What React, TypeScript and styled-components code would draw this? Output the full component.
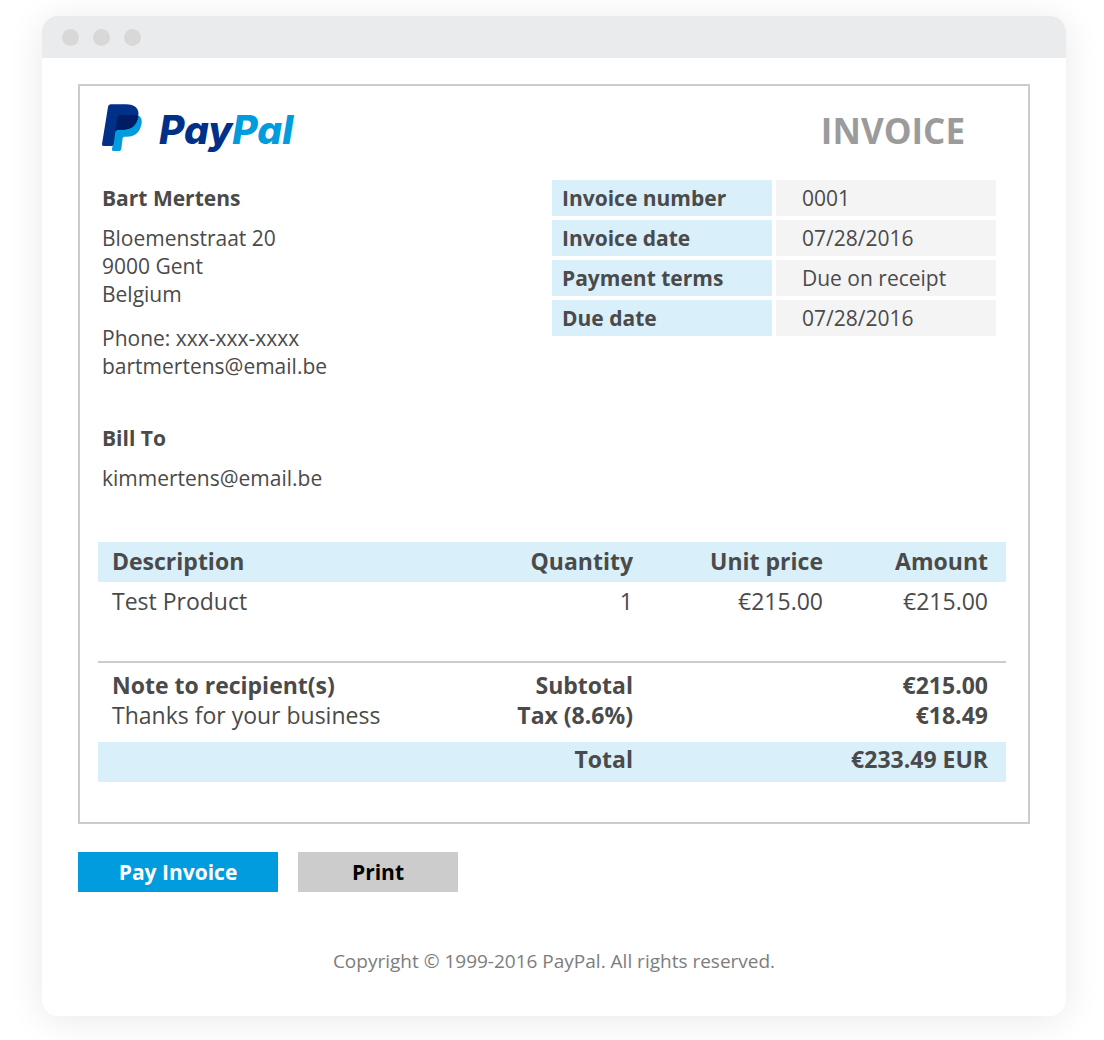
import React from "react";
import styled, { createGlobalStyle } from "styled-components";

const GlobalStyle = createGlobalStyle`
  *, *::before, *::after { box-sizing: border-box; }
  body {
    margin: 0;
    background: #fff;
    color: #4a4a4a;
    font-family: "Open Sans", "Noto Sans", sans-serif;
    font-size: 21px;
    line-height: 28px;
  }
`;

const Page = styled.div`
  padding: 16px 38px 24px 42px;
`;

const BrowserWindow = styled.main`
  border-radius: 16px;
  overflow: hidden;
  background: #fff;
  box-shadow: 0 4px 36px rgba(0, 0, 0, 0.09);
`;

const TitleBar = styled.div`
  display: flex;
  align-items: center;
  gap: 14px;
  height: 42px;
  padding: 0 20px;
  background: #eaebed;
`;

const Dot = styled.span`
  width: 17px;
  height: 17px;
  border-radius: 50%;
  background: #d8d8d8;
`;

const Content = styled.div`
  padding: 26px 36px 40px;
`;

const Sheet = styled.article`
  padding: 0 22px 40px 18px;
  border: 2px solid #ccc;
`;

const SheetHeader = styled.header`
  display: flex;
  justify-content: space-between;
  align-items: center;
  height: 94px;
  padding: 0 41px 4px 4px;
`;

const Brand = styled.div`
  display: flex;
  align-items: flex-end;
  gap: 17px;
  padding-bottom: 7px;
`;

const Wordmark = styled.div`
  display: flex;
  color: #003087;
  font: italic 800 39px/44px Inter, sans-serif;
`;

const WordmarkAccent = styled.span`
  color: #009cde;
`;

const InvoiceHeading = styled.h1`
  margin: 0;
  color: #9b9b9b;
  font-size: 35px;
  line-height: 44px;
  font-weight: 700;
`;

const Parties = styled.section`
  display: flex;
  justify-content: space-between;
  align-items: flex-start;
  padding: 0 10px 50px 4px;
`;

const Contact = styled.address`
  display: flex;
  flex-direction: column;
  gap: 12px;
  padding-top: 4px;
  font-style: normal;
`;

const Name = styled.strong`
  font-weight: 700;
`;

const Lines = styled.div`
  display: flex;
  flex-direction: column;
`;

const Phone = styled(Lines)`
  margin-top: 4px;
  margin-bottom: 32px;
`;

const MetaTable = styled.table`
  width: 444px;
  border-spacing: 0;
  table-layout: fixed;
`;

const MetaLabel = styled.th`
  width: 224px;
  height: 40px;
  padding: 0 10px;
  background: #d9effa;
  border: solid #fff;
  border-width: 0 4px 4px 0;
  font-weight: 700;
  text-align: left;
`;

const MetaValue = styled.td`
  padding: 0 26px;
  background: #f4f4f4;
  border-bottom: 4px solid #fff;
`;

const ItemsTable = styled.table`
  width: 100%;
  border-collapse: collapse;
  font-size: 23px;
  line-height: 30px;
  white-space: nowrap;
`;

const Col = styled.col<{ $width?: number }>`
  width: ${(p) => (p.$width ? `${p.$width}px` : "auto")};
`;

const Cell = styled.td<{ $right?: boolean; $bold?: boolean }>`
  padding: 0 18px 0 14px;
  text-align: ${(p) => (p.$right ? "right" : "left")};
  font-weight: ${(p) => (p.$bold ? 700 : 400)};
`;

const HeadRow = styled.tr`
  background: #d9effa;
  & > th { padding-top: 4px; padding-bottom: 6px; }
`;

const ItemRow = styled.tr`
  border-bottom: 2px solid #ccc;
  & > td { padding-top: 4px; padding-bottom: 45px; }
`;

const SubtotalRow = styled.tr`
  & > td { padding-top: 7px; }
`;

const TaxRow = styled.tr`
  & > td { padding-bottom: 12px; }
`;

const TotalRow = styled.tr`
  background: #d9effa;
  & > td { padding-top: 2px; padding-bottom: 8px; }
`;

const Actions = styled.div`
  display: flex;
  gap: 20px;
  padding: 28px 0 54px;
`;

const Button = styled.button<{ $primary?: boolean }>`
  width: ${(p) => (p.$primary ? 200 : 160)}px;
  height: 40px;
  padding: 0;
  border: 0;
  background: ${(p) => (p.$primary ? "#009cde" : "#ccc")};
  color: ${(p) => (p.$primary ? "#fff" : "#000")};
  font: inherit;
  font-weight: 700;
  cursor: pointer;
`;

const Copyright = styled.footer`
  color: #7d7d7d;
  font-size: 19px;
  line-height: 30px;
  text-align: center;
`;

const meta = [
  ["Invoice number", "0001"],
  ["Invoice date", "07/28/2016"],
  ["Payment terms", "Due on receipt"],
  ["Due date", "07/28/2016"],
];

function PayPalMark() {
  return (
    <svg width="40" height="48" viewBox="0 0 120 144" aria-hidden="true">
      <path
        fill="#009cde"
        d="M47 36 H112 C119 42 121 52 118 62 C113 86 98 98 74 98 H68 C65 98 63 100 62 103 L58 134 C57 139 55 141 51 141 H34 C31 141 29 139 30 136 L33 116 Z"
      />
      <path
        fill="#003087"
        d="M27 1 H72 C98 1 113 13 109 37 C105 63 90 77 62 77 H50 C43 77 41 80 40 85 L35 120 C34 124 32 126 29 126 H5 C1 126 0 124 0 120 L18 9 C19 4 22 1 27 1 Z"
      />
      <path
        fill="#001c64"
        d="M54 33 H92 C99 33 105 34 109 36 C105 63 90 77 62 77 H50 C45 77 42 79 40 83 L46 40 C47 36 50 33 54 33 Z"
      />
    </svg>
  );
}

export default function App() {
  return (
    <Page>
      <GlobalStyle />
      <BrowserWindow>
        <TitleBar>
          <Dot />
          <Dot />
          <Dot />
        </TitleBar>
        <Content>
          <Sheet>
            <SheetHeader>
              <Brand>
                <PayPalMark />
                <Wordmark>
                  Pay<WordmarkAccent>Pal</WordmarkAccent>
                </Wordmark>
              </Brand>
              <InvoiceHeading>INVOICE</InvoiceHeading>
            </SheetHeader>
            <Parties>
              <Contact>
                <Name>Bart Mertens</Name>
                <Lines>
                  <span>Bloemenstraat 20</span>
                  <span>9000 Gent</span>
                  <span>Belgium</span>
                </Lines>
                <Phone>
                  <span>Phone: xxx-xxx-xxxx</span>
                  <span>bartmertens@email.be</span>
                </Phone>
                <Name>Bill To</Name>
                <span>kimmertens@email.be</span>
              </Contact>
              <MetaTable>
                <tbody>
                  {meta.map(([label, value]) => (
                    <tr key={label}>
                      <MetaLabel scope="row">{label}</MetaLabel>
                      <MetaValue>{value}</MetaValue>
                    </tr>
                  ))}
                </tbody>
              </MetaTable>
            </Parties>
            <ItemsTable>
              <colgroup>
                <Col />
                <Col $width={180} />
                <Col $width={190} />
                <Col $width={165} />
              </colgroup>
              <thead>
                <HeadRow>
                  <Cell as="th" $bold>Description</Cell>
                  <Cell as="th" $bold $right>Quantity</Cell>
                  <Cell as="th" $bold $right>Unit price</Cell>
                  <Cell as="th" $bold $right>Amount</Cell>
                </HeadRow>
              </thead>
              <tbody>
                <ItemRow>
                  <Cell>Test Product</Cell>
                  <Cell $right>1</Cell>
                  <Cell $right>€215.00</Cell>
                  <Cell $right>€215.00</Cell>
                </ItemRow>
              </tbody>
              <tfoot>
                <SubtotalRow>
                  <Cell $bold>Note to recipient(s)</Cell>
                  <Cell $bold $right>Subtotal</Cell>
                  <Cell $bold $right colSpan={2}>€215.00</Cell>
                </SubtotalRow>
                <TaxRow>
                  <Cell>Thanks for your business</Cell>
                  <Cell $bold $right>Tax (8.6%)</Cell>
                  <Cell $bold $right colSpan={2}>€18.49</Cell>
                </TaxRow>
                <TotalRow>
                  <Cell />
                  <Cell $bold $right>Total</Cell>
                  <Cell $bold $right colSpan={2}>€233.49 EUR</Cell>
                </TotalRow>
              </tfoot>
            </ItemsTable>
          </Sheet>
          <Actions>
            <Button type="button" $primary>Pay Invoice</Button>
            <Button type="button">Print</Button>
          </Actions>
          <Copyright>Copyright © 1999-2016 PayPal. All rights reserved.</Copyright>
        </Content>
      </BrowserWindow>
    </Page>
  );
}
